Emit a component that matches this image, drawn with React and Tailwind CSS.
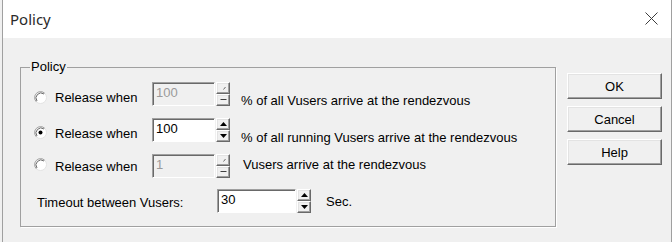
import React from "react";

const font = { fontFamily: '"Liberation Sans", Arial, sans-serif' };

function Radio({ checked }) {
  return (
    <svg width="13" height="13" viewBox="0 0 13 13" className="shrink-0">
      <circle cx="6.5" cy="6.5" r="6" fill="#ffffff" stroke="#e3e3e3" />
      <path d="M 2.26 10.74 A 6 6 0 0 1 10.74 2.26" fill="none" stroke="#a0a0a0" />
      <path d="M 3 10 A 5 5 0 0 1 10 3" fill="none" stroke="#696969" />
      {checked && <circle cx="6.5" cy="6.5" r="2" fill="#000" />}
    </svg>
  );
}

function SpinBtn({ dir, disabled }) {
  return (
    <div className="flex-1 flex items-center justify-center bg-[#f0f0f0] border border-t-white border-l-white border-r-[#696969] border-b-[#696969] shadow-[inset_-1px_-1px_0_#a0a0a0,inset_1px_1px_0_#e3e3e3]">
      <svg width="7" height="4" viewBox="0 0 7 4">
        {disabled ? (
          dir === "up" ? (
            <path d="M 3.5 3.5 L 5.5 1" stroke="#6d6d6d" strokeWidth="1" fill="none" />
          ) : (
            <path d="M 0.5 1.5 L 6.5 1.5" stroke="#404040" strokeWidth="1" fill="none" />
          )
        ) : dir === "up" ? (
          <path d="M 0 4 L 3.5 0 L 7 4 Z" fill="#000" />
        ) : (
          <path d="M 0 0 L 7 0 L 3.5 4 Z" fill="#000" />
        )}
      </svg>
    </div>
  );
}

function Spin({ value, disabled, w }) {
  return (
    <div className="flex h-[24px] shrink-0">
      <div
        className={
          (w === "wide" ? "w-[79px] " : "w-[63px] ") +
          (disabled ? "bg-[#f0f0f0] text-[#9a9a9a] " : "bg-white text-black ") +
          "h-full border border-t-[#a0a0a0] border-l-[#a0a0a0] border-r-white border-b-white shadow-[inset_1px_1px_0_#696969] pl-[3px] pt-[2px] text-[13px] leading-[15px]"
        }
      >
        {value}
      </div>
      <div className="ml-[1px] w-[14px] h-full flex flex-col">
        <SpinBtn dir="up" disabled={disabled} />
        <SpinBtn dir="down" disabled={disabled} />
      </div>
    </div>
  );
}

function Button({ children }) {
  return (
    <div className="w-[95px] h-[26px] flex items-center justify-center bg-[#f0f0f0] border border-t-white border-l-white border-r-[#696969] border-b-[#696969] shadow-[inset_-1px_-1px_0_#a0a0a0,inset_1px_1px_0_#e3e3e3] text-[13px] leading-[15px] text-black">
      {children}
    </div>
  );
}

export default function App() {
  return (
    <div className="w-[672px] h-[242px] overflow-hidden bg-[#f0f0f0]" style={font}>
      <div className="ml-[2px] w-[670px] h-[242px] border-l border-r border-[#a0a0a0] flex flex-col">
        <div className="h-[38px] bg-white flex items-center justify-between pl-[7px] pr-[13px] shrink-0">
          <span
            className="text-[15px] text-[#2a2a2a]"
            style={{ fontFamily: '"Noto Sans", "Open Sans", sans-serif' }}
          >
            Policy
          </span>
          <svg width="13" height="13" viewBox="0 0 13 13" className="mt-[-1px]">
            <path d="M 0.5 0.5 L 12.5 12.5 M 12.5 0.5 L 0.5 12.5" stroke="#3c3c3c" strokeWidth="1" fill="none" />
          </svg>
        </div>
        <div className="flex-1 bg-[#f0f0f0] flex pl-[17px] pt-[29px] text-[13px] leading-[15px] text-black">
          <div className="relative w-[536px] h-[160px] border border-[#a0a0a0] shadow-[1px_1px_0_#ffffff] shrink-0">
            <div className="absolute left-[9px] top-[-9px] px-[1px] bg-[#f0f0f0] leading-[15px]">Policy</div>
            <div className="flex flex-col">
              <div className="flex items-start h-[24px] mt-[14px]">
                <div className="ml-[13px] mt-[9px]"><Radio /></div>
                <div className="ml-[8px] mt-[8px] w-[97px] whitespace-nowrap">Release when</div>
                <Spin value="100" disabled />
                <div className="ml-[11px] mt-[11px] whitespace-nowrap">% of all Vusers arrive at the rendezvous</div>
              </div>
              <div className="flex items-start h-[24px] mt-[12px]">
                <div className="ml-[13px] mt-[8px]"><Radio checked /></div>
                <div className="ml-[8px] mt-[8px] w-[97px] whitespace-nowrap">Release when</div>
                <Spin value="100" />
                <div className="ml-[11px] mt-[12px] whitespace-nowrap">% of all running Vusers arrive at the rendezvous</div>
              </div>
              <div className="flex items-start h-[24px] mt-[12px]">
                <div className="ml-[13px] mt-[4px]"><Radio /></div>
                <div className="ml-[8px] mt-[5px] w-[97px] whitespace-nowrap">Release when</div>
                <Spin value="1" disabled />
                <div className="ml-[13px] mt-[3px] whitespace-nowrap">Vusers arrive at the rendezvous</div>
              </div>
              <div className="flex items-start h-[24px] mt-[11px]">
                <div className="ml-[16px] mt-[6px] w-[180px] whitespace-nowrap">Timeout between Vusers:</div>
                <Spin value="30" w="wide" />
                <div className="ml-[15px] mt-[5px] whitespace-nowrap">Sec.</div>
              </div>
            </div>
          </div>
          <div className="ml-[11px] mt-[6px] flex flex-col gap-[7px]">
            <Button>OK</Button>
            <Button>Cancel</Button>
            <Button>Help</Button>
          </div>
        </div>
      </div>
    </div>
  );
}
